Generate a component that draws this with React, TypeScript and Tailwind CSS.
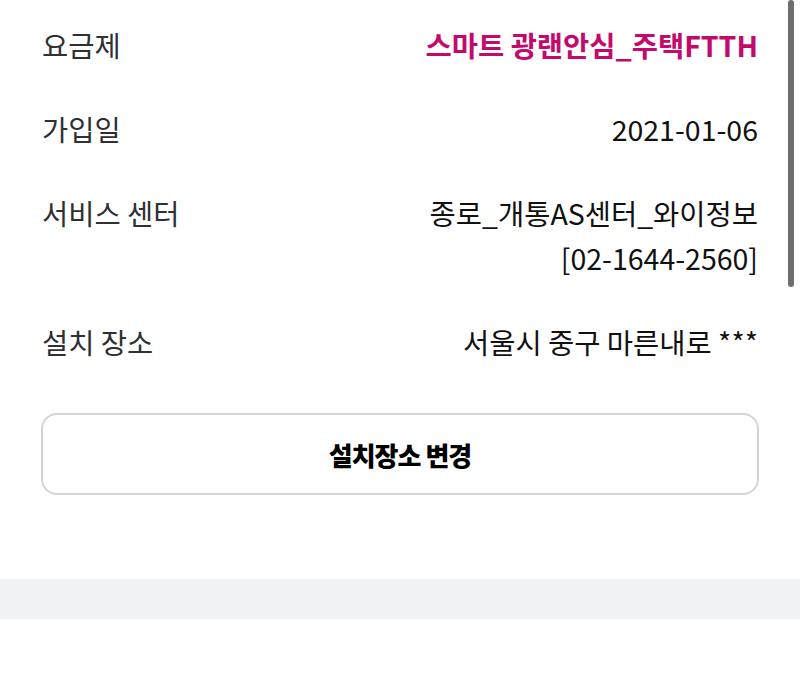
import React from "react";

const font = { fontFamily: '"Noto Sans CJK KR", "Noto Sans", sans-serif' };

function Row({ label, children }: { label: string; children: React.ReactNode }) {
  return (
    <div className="flex justify-between items-start">
      <div className="text-[28.5px] leading-[45px] text-[#2e3033] whitespace-nowrap">{label}</div>
      <div className="text-right">{children}</div>
    </div>
  );
}

export default function App() {
  return (
    <div className="relative w-[800px] h-[676px] bg-white overflow-hidden" style={font}>
      <div className="px-[42px] pt-[22px] flex flex-col gap-[39px]">
        <Row label="요금제">
          <div className="text-[28.5px] leading-[45px] font-bold text-[#c4096c]">스마트 광랜안심_주택FTTH</div>
        </Row>
        <Row label="가입일">
          <div className="text-[28.5px] leading-[45px] text-[#111]">2021-01-06</div>
        </Row>
        <Row label="서비스 센터">
          <div className="text-[28.5px] leading-[45px] text-[#111]">
            종로_개통AS센터_와이정보
            <br />
            [02-1644-2560]
          </div>
        </Row>
        <Row label="설치 장소">
          <div className="text-[28.5px] leading-[45px] text-[#111]">서울시 중구 마른내로 ***</div>
        </Row>
      </div>
      <div className="px-[41px] mt-[49px]">
        <button className="w-full h-[82px] rounded-[16px] border-2 border-[#d4d4d4] bg-white flex items-center justify-center text-[26px] font-extrabold text-black tracking-[-1px]">
          설치장소 변경
        </button>
      </div>
      <div className="mt-[84px] h-[40px] bg-[#f1f2f4]" />
      <div className="absolute right-[6px] top-0 w-[6px] h-[287px] rounded-full bg-[#6e6e6e]" />
    </div>
  );
}
